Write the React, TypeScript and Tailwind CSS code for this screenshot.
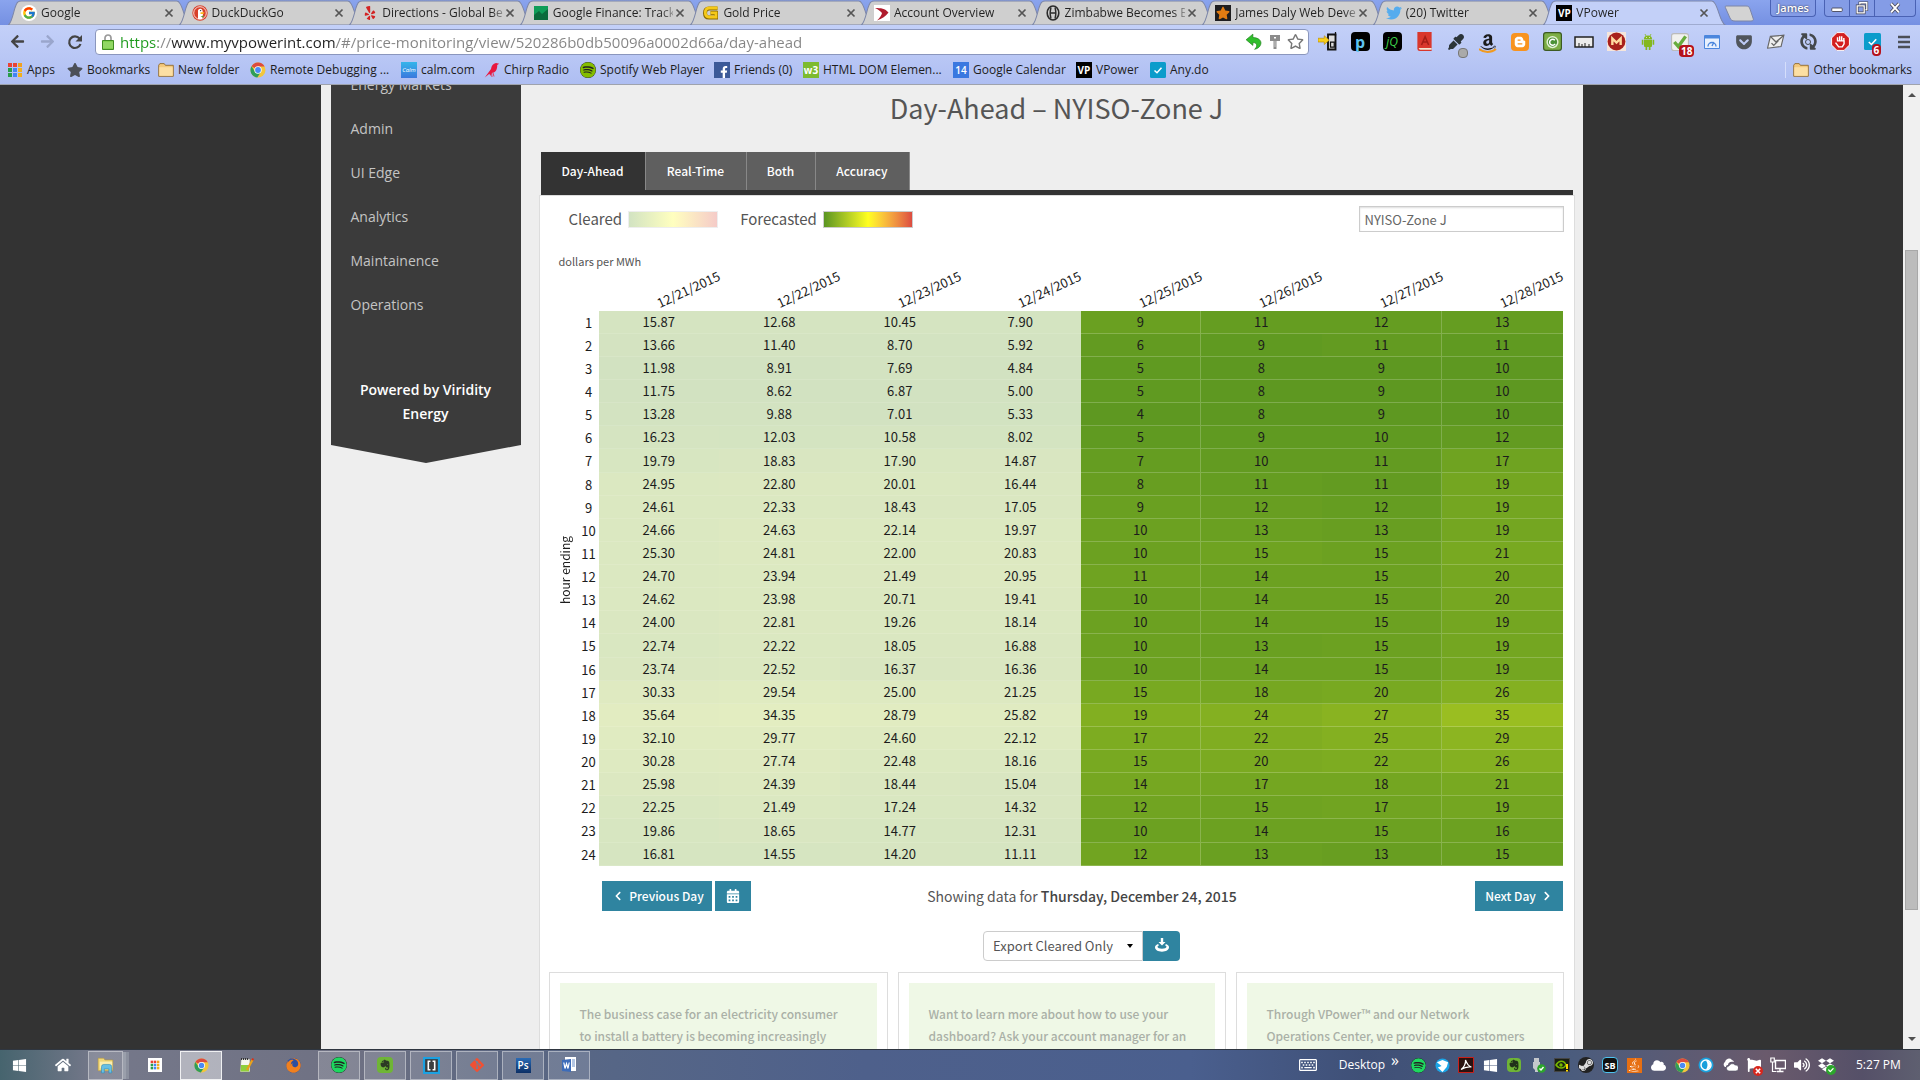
import React from "react";
import {
  FaAmazon, FaGetPocket, FaYelp, FaBloggerB, FaFacebookF, FaTwitter, FaEvernote, FaWindows, FaHome,
  FaDropbox, FaGitAlt, FaFirefox, FaJava, FaCloud, FaSteamSymbol, FaRegStar, FaStar, FaSpotify, FaCalendarAlt,
  FaChevronLeft, FaChevronRight, FaArrowLeft, FaArrowRight, FaEyeDropper, FaSyncAlt, FaRegKeyboard,
  FaVolumeUp, FaFlag, FaCheck,
} from "react-icons/fa";
import { FcGoogle } from "react-icons/fc";

const UI = "font-['Open_Sans','Noto_Sans',sans-serif]";
const BODY = "font-['Noto_Sans_CJK_SC','Noto_Sans',sans-serif]";

/* ---------- small drawings ---------- */

function Svg({ children, className = "size-4", box = "0 0 16 16" }: { children: React.ReactNode; className?: string; box?: string }) {
  return <svg viewBox={box} className={className + " shrink-0"} fill="none" aria-hidden="true">{children}</svg>;
}

function ChromeIcon({ className = "size-4" }: { className?: string }) {
  return (
    <Svg className={className}>
      <circle cx="8" cy="8" r="7.5" fill="#f2c63c" />
      <path d="M8 8 1.5 4.2A7.5 7.5 0 0 1 14.6 4.4H8z" fill="#dd4b3e" />
      <path d="M1.5 4.2A7.5 7.5 0 0 0 7.3 15.5L11 9.8 8 8 5 9.6z" fill="#2f9e58" />
      <circle cx="8" cy="8" r="3.7" fill="#fff" />
      <circle cx="8" cy="8" r="2.9" fill="#4a8af4" />
    </Svg>
  );
}

function FolderIcon() {
  return (
    <Svg>
      <path d="M.7 3.2 1.9 1.6h4.3l1.2 1.7h7.9v11H.7z" fill="#f4c97c" stroke="#8f6a31" strokeWidth=".9" />
      <path d="M1.3 5.2h13.4v8.6H1.3z" fill="#fcdfa3" />
    </Svg>
  );
}

function VPIcon() {
  return <span className="grid size-4 shrink-0 place-items-center bg-black text-[10px] font-bold leading-none text-white">VP</span>;
}

function SpotifyIcon({ dot, className }: { dot: string; className: string }) {
  return <FaSpotify className={"shrink-0 rounded-full bg-[#222] " + dot + " " + className} />;
}

function DuckIcon() {
  return (
    <Svg>
      <circle cx="8" cy="8" r="7.7" fill="#d8402a" />
      <circle cx="8" cy="8" r="6.3" stroke="#fff" strokeWidth=".8" />
      <path d="M6 14V6.500C5.500 3.500 9.800 2.800 10.600 5.800L11 9l-.8 5z" fill="#fff" />
      <path d="M8.500 7.300h4l-1 1.700H8.500z" fill="#fbb921" />
      <path d="m8.500 11.500 3 1v-2z" fill="#4aa83e" />
      <circle cx="8.600" cy="5.600" r=".7" fill="#234" />
    </Svg>
  );
}

function AppsIcon({ className = "size-4" }: { className?: string }) {
  const c = ["#e94335", "#e94335", "#f0a020", "#2a9d4b", "#4285f4", "#f0b020", "#2a9d4b", "#4285f4", "#f0b020"];
  return (
    <Svg className={className}>
      {c.map((f, i) => <rect key={i} x={1 + (i % 3) * 5} y={1 + Math.floor(i / 3) * 5} width="4" height="4" fill={f} />)}
    </Svg>
  );
}

function FinanceIcon() {
  return (
    <Svg>
      <path d="M1 1h14v14H1z" fill="#0f9d58" />
      <path d="m1 10 5-4 3 3 6-5v11H1z" fill="#0b6b3c" />
    </Svg>
  );
}

function GoldIcon() {
  return (
    <Svg>
      <path d="M14.500 3.500H6C3.500 3.500 2 5 2 8s1.500 4.600 4 4.600h7V8H7.500" stroke="#8a6a00" strokeWidth="4" />
      <path d="M14.500 3H6C3.500 3 2.300 5 2.300 7.600S3.500 12 6 12h7V7.800H7.500" stroke="#f5c918" strokeWidth="2.800" />
    </Svg>
  );
}

function AccountIcon() {
  return (
    <Svg>
      <path d="M0 0h16v16H0z" fill="#fff" />
      <path d="M1 3c6 0 10 .5 13.500 4.500C12 11 8 14 3 15.500c3-3 4.500-5 5-7.500C6 5.500 4 4.500 1 3z" fill="#b01c2e" />
    </Svg>
  );
}

function AtomIcon() {
  return (
    <Svg>
      <ellipse cx="8" cy="8" rx="5.800" ry="7" stroke="#2b2b2b" strokeWidth="1.600" />
      <path d="M6 2.500c-1 3-1 8 0 11M10 2.500c1 3 1 8 0 11M5.500 8h5" stroke="#2b2b2b" strokeWidth="1.300" />
    </Svg>
  );
}

function BlackStarIcon() {
  return <span className="grid size-4 shrink-0 place-items-center bg-[#1d1d1f]"><FaStar className="size-3.5 text-[#e07b12]" /></span>;
}

function BirdIcon() {
  return (
    <Svg>
      <path d="M.8 15.500 7 7c.5-3 2-5.500 5-6l3.200.8-2 1.200C13.500 8 11 11 7.500 11l-1.200 3-.9-2.200z" fill="#e8173f" />
      <path d="m7.500 11 .5 4M9 11l1 3.500" stroke="#e8173f" strokeWidth=".8" />
    </Svg>
  );
}

function AndroidIcon() {
  return (
    <Svg>
      <path d="M4 5.500h8V12a1 1 0 0 1-1 1H5a1 1 0 0 1-1-1zM4 5a4 3.500 0 0 1 8 0zM5.500 12.500h1.700V16H5.500zM8.800 12.500h1.700V16H8.800zM1.800 5.800h1.600v5H1.800zM12.600 5.800h1.600v5h-1.600z" fill="#84b81c" />
      <path d="m5 0 1 2m5-2-1 2" stroke="#84b81c" strokeWidth=".8" />
      <path d="M6 3.500h.8m2.400 0h.8" stroke="#fff" strokeWidth=".8" />
    </Svg>
  );
}

function KeyIcon() {
  return (
    <Svg className="h-4 w-3" box="0 0 12 16">
      <path d="M1 1h10v6H1z" fill="#8c8c8c" />
      <path d="M5 3h2v1.500H5z" fill="#fff" />
      <path d="M4.500 7h3v8h-3z" fill="#8c8c8c" />
      <path d="M6 7v6" stroke="#ddd" strokeWidth=".8" />
    </Svg>
  );
}

function AnyDoIcon({ className = "size-4" }: { className?: string }) {
  return (
    <Svg className={className}>
      <rect width="16" height="16" rx="1.500" fill="#0b9ccb" />
      <path d="m4.500 8.500 2.500 2.300 4.500-5" stroke="#fff" strokeWidth="1.500" />
    </Svg>
  );
}

function Badge({ children }: { children: React.ReactNode }) {
  return <span className="absolute -bottom-1.5 left-2 rounded-sm bg-[#b5121b] px-0.5 text-[10px] font-bold leading-3 text-white">{children}</span>;
}

/* ---------- browser chrome ---------- */

const TABS: { label: string; icon: React.ReactNode }[] = [
  { label: "Google", icon: <span className="grid size-4 shrink-0 place-items-center rounded-full bg-white"><FcGoogle className="size-3.5" /></span> },
  { label: "DuckDuckGo", icon: <DuckIcon /> },
  { label: "Directions - Global Be", icon: <FaYelp className="size-4 shrink-0 p-px text-[#d32323]" /> },
  { label: "Google Finance: Track", icon: <FinanceIcon /> },
  { label: "Gold Price", icon: <GoldIcon /> },
  { label: "Account Overview", icon: <AccountIcon /> },
  { label: "Zimbabwe Becomes B", icon: <AtomIcon /> },
  { label: "James Daly Web Deve", icon: <BlackStarIcon /> },
  { label: "(20) Twitter", icon: <FaTwitter className="size-4 shrink-0 text-[#55acee]" /> },
  { label: "VPower", icon: <VPIcon /> },
];

function TabStrip() {
  return (
    <div className="flex h-[25px] bg-linear-to-b from-[#8aa4ee] to-[#7590e2]">
      <div role="tablist" className="ml-2 flex max-w-[1706px] flex-1">
        {TABS.map((t, i) => {
          const active = i === TABS.length - 1;
          return (
            <div key={t.label} className="relative h-full min-w-0 flex-1">
              <svg viewBox="0 0 182 25" preserveAspectRatio="none" className="absolute inset-y-0 -right-3 left-0 h-full w-[calc(100%+12px)]" aria-hidden="true">
                <path d="M0 25C5 23 6 4 10 2Q11 1 13 1H168Q170 1 171 3C175 8 177 24 182 25Z" fill={active ? "#c3d0f8" : "#cfcfcf"} stroke="#7c86a8" strokeWidth="1" />
              </svg>
              <div className="relative flex h-full items-center gap-1 pl-[13px]">
                {t.icon}
                <button role="tab" aria-selected={active} className="min-w-0 flex-1 whitespace-nowrap bg-linear-to-r from-[#222] from-90% to-[#999] bg-clip-text text-left text-xs leading-5 text-transparent">{t.label}</button>
                <button aria-label={"Close " + t.label} className="-ml-1 mr-[3px] size-3.5 shrink-0">
                  <Svg className="size-3.5"><path d="m4 4 8 8m0-8-8 8" stroke="#555" strokeWidth="2" /></Svg>
                </button>
              </div>
            </div>
          );
        })}
      </div>
      <button aria-label="New tab" className="ml-2 h-[22px] w-[34px] self-center">
        <Svg box="0 0 34 20" className="h-[22px] w-[34px]"><path d="M4 3h20c3 0 3 1 4 3l3 9c1 2 0 3-2 3H13c-3 0-4-1-5-3L4 6C3 4 3 3 4 3z" fill="#d3d3d3" stroke="#7c86a8" /></Svg>
      </button>
      <div className="ml-auto flex items-start pr-1">
        <button className="mr-2 h-[17px] w-[46px] rounded-b border border-t-0 border-[#4a62b4] bg-[#849ce6] text-[11px] font-semibold leading-4 text-white [text-shadow:0_0_2px_#223]">James</button>
        <div className="flex rounded-b border border-t-0 border-[#4a62b4] bg-[#849ce6]">
          <button aria-label="Minimize" className="grid h-4 w-[25px] place-items-center border-r border-[#4a62b4]"><Svg className="size-3.5"><rect x="2" y="8" width="12" height="4" rx="1" fill="#fff" stroke="#445" /></Svg></button>
          <button aria-label="Restore" className="grid h-4 w-[25px] place-items-center border-r border-[#4a62b4]"><Svg className="size-3.5"><path d="M5.500 2h8v8h-8z" stroke="#445" strokeWidth="3" /><path d="M5.500 2h8v8h-8z" stroke="#fff" strokeWidth="1.500" /><path d="M2.500 5.500h8v8h-8z" fill="#849ce6" stroke="#445" strokeWidth="3" /><path d="M2.500 5.500h8v8h-8z" stroke="#fff" strokeWidth="1.500" /></Svg></button>
          <button aria-label="Close window" className="grid h-4 w-10 place-items-center"><Svg className="size-3.5"><path d="m3.500 3 9 10m0-10-9 10" stroke="#445" strokeWidth="4" /><path d="m3.500 3 9 10m0-10-9 10" stroke="#fff" strokeWidth="2.200" /></Svg></button>
        </div>
      </div>
    </div>
  );
}

const EXTENSIONS: { name: string; icon: React.ReactNode }[] = [
  { name: "Send to phone", icon: <Svg className="size-5"><path d="M8 2h6v12H8z" fill="#ddd" stroke="#111" strokeWidth="1.500" /><path d="M10 8h3v4h-3zM14 0v3" stroke="#111" /><path d="M0 5h5V3l4 3.500L5 10V8H0z" fill="#f8cf1b" stroke="#b58900" strokeWidth=".5" /></Svg> },
  { name: "Pandora", icon: <span className="grid size-[19px] place-items-center rounded-sm bg-black text-base font-bold leading-none text-[#5fc3f0]">p</span> },
  { name: "jQuery", icon: <span className="grid size-[19px] place-items-center rounded-sm bg-black text-xs italic leading-none text-[#3fd34a]">jQ</span> },
  { name: "Dictionary", icon: <Svg className="size-[19px]"><path d="M2 0h12v16H4a2 2 0 0 1-2-2z" fill="#d9372c" /><path d="M3 13.500h11v1.500H4z" fill="#f3e6d2" /><path d="m5.500 11 3-7 3 7M6.500 8.500h4" stroke="#a51e16" strokeWidth="1.300" /></Svg> },
  { name: "Color picker", icon: <span className="relative"><FaEyeDropper className="size-4 text-[#2b3438]" /><span className="absolute -bottom-2 left-2.5 size-2.5 rounded-sm border border-[#777] bg-[#aaa]" /></span> },
  { name: "Amazon", icon: <span className="relative"><FaAmazon className="size-[18px] text-[#1b1b1b]" /><Svg box="0 0 18 5" className="absolute -bottom-0.5 left-0 h-[5px] w-[18px]"><path d="M0 1c5 4 12 4 17 0" stroke="#f19a1f" strokeWidth="2" /></Svg></span> },
  { name: "Blogger", icon: <span className="grid size-[18px] place-items-center rounded-sm bg-[#f8931f]"><FaBloggerB className="size-3 text-white" /></span> },
  { name: "Clear cache", icon: <Svg className="size-[19px]"><rect x=".5" y=".5" width="15" height="15" rx="2" fill="#7cae46" stroke="#3c5a22" /><circle cx="8" cy="8.500" r="4.500" fill="#4b9136" stroke="#e3f2d4" strokeWidth="1.200" /><path d="M10 7a2.500 2.500 0 1 0 .2 3" stroke="#fff" strokeWidth="1.300" /></Svg> },
  { name: "Ruler", icon: <Svg box="0 0 20 12" className="h-3 w-5"><path d="M1 1h18v10H1z" fill="#ececec" stroke="#222" strokeWidth="1.500" /><path d="M5 11V7m3 4V8m3 3V7m4 4V8" stroke="#222" /></Svg> },
  { name: "Mega", icon: <Svg className="size-[19px]"><path d="M0 0h16v16H0z" fill="#f5e6dc" /><circle cx="8" cy="8" r="7.500" fill="#a8201c" /><path d="M4.500 11V5.500L8 9l3.500-3.500V11" stroke="#ffd9a0" strokeWidth="2" /></Svg> },
  { name: "Android", icon: <AndroidIcon /> },
  { name: "Checker", icon: <span className="relative"><Svg className="size-[18px]"><rect x=".5" y=".5" width="15" height="15" rx="2" fill="#f1f1ee" stroke="#bbb" /><path d="m3 8 3.500 4L13 3" stroke="#67ac3d" strokeWidth="3" /></Svg><Badge>18</Badge></span> },
  { name: "Page speed", icon: <Svg><path d="M.5 1.500h15v13H.5z" fill="#e8f0fd" stroke="#4b86dd" /><path d="M1 1h14v3.500H1z" fill="#4b86dd" /><path d="M4 12.500a4 4 0 0 1 8 0M8 12l2-4" stroke="#4b86dd" strokeWidth="1.400" /></Svg> },
  { name: "Pocket", icon: <FaGetPocket className="size-[18px] text-[#50555c]" /> },
  { name: "Mail", icon: <Svg className="size-[18px]"><path d="m3 3 12-1-2.500 10-12 1.500z" fill="#eee" stroke="#666" /><path d="m3 3 5 5 7-6M4 9l2 2 4-4" stroke="#666" strokeWidth="1.200" /></Svg> },
  { name: "Sync", icon: <span className="relative grid place-items-center"><FaSyncAlt className="size-[17px] rotate-90 text-[#44484c]" /><span className="absolute size-1.5 rounded-full border border-[#44484c]" /></span> },
  { name: "AdBlock", icon: <Svg className="size-[19px]"><path d="M5 .5h6L15.500 5v6L11 15.500H5L.5 11V5z" fill="#d31f1f" stroke="#fff" strokeWidth=".8" /><path d="M5.500 8V4.500M7.300 8V3.500M9 8V3.500M10.800 8V5M5.200 7.500h5.800v2.500L9.500 12.500h-3L3.800 9" stroke="#fff" strokeWidth="1.200" /></Svg> },
  { name: "Any.do", icon: <span className="relative"><AnyDoIcon className="size-[17px]" /><Badge>6</Badge></span> },
  { name: "Menu", icon: <Svg><path d="M2 3h12M2 8h12M2 13h12" stroke="#4b4f57" strokeWidth="2.600" /></Svg> },
];

function Toolbar() {
  return (
    <div className="flex h-8 items-center bg-linear-to-b from-[#c3d0f8] to-[#b9c7f5] pt-px">
      <div className="flex w-[95px] shrink-0 items-center pl-[5px]">
        <button aria-label="Back" className="grid h-6 w-6 place-items-center"><FaArrowLeft className="size-[15px] text-[#444]" /></button>
        <button aria-label="Forward" className="ml-1.5 grid h-6 w-6 place-items-center"><FaArrowRight className="size-[15px] text-[#9aa6cc]" /></button>
        <button aria-label="Reload" className="ml-1 grid h-6 w-6 place-items-center">
          <Svg><path d="M12.500 4.500A5.800 5.800 0 1 0 13.500 10" stroke="#444" strokeWidth="2.200" /><path d="M15 1v6.500H8.500z" fill="#444" /></Svg>
        </button>
      </div>
      <div className="flex h-[26px] min-w-0 flex-1 items-center rounded-sm border border-[#8a96bd] bg-white pl-1.5 pr-1">
        <Svg className="h-4 w-3" box="0 0 12 16">
          <path d="M3 7V4a3 3 0 0 1 6 0v3" stroke="#9a9a9a" strokeWidth="1.700" />
          <path d="M.5 6.500h11v9H.5z" fill="#7fd04c" stroke="#3f8c22" />
          <path d="M1 9h10M1 11h10M1 13h10" stroke="#b5e694" strokeWidth=".7" />
        </Svg>
        <input
          aria-label="Address"
          defaultValue="https://www.myvpowerint.com/#/price-monitoring/view/520286b0db50096a0002d66a/day-ahead"
          className="ml-1.5 h-[22px] min-w-0 flex-1 bg-[linear-gradient(to_right,#1c9a1c_38px,#888_38px,#888_52px,#222_52px,#222_216px,#848484_216px)] bg-clip-text text-[15px] leading-[22px] text-transparent outline-none"
        />
        <div className="flex items-center gap-1.5">
          <Svg className="size-[18px]"><path d="M1 6 7 1v3c5 0 8 3 7 6-.6 2.500-3 4-5.500 4.500C11 12.500 11.500 8.500 7 8.500V11z" fill="#2fbf2b" stroke="#1c7f1a" strokeWidth=".6" /></Svg>
          <KeyIcon />
          <button aria-label="Bookmark this page"><FaRegStar className="size-[17px] text-[#777]" /></button>
        </div>
      </div>
      <div className="ml-[3px] flex shrink-0">
        {EXTENSIONS.map((e) => <button key={e.name} aria-label={e.name} className="grid h-6 w-8 place-items-center">{e.icon}</button>)}
      </div>
    </div>
  );
}

const BOOKMARKS: { label: string; w: string; icon: React.ReactNode }[] = [
  { label: "Apps", w: "w-[60px]", icon: <AppsIcon /> },
  { label: "Bookmarks", w: "w-[91px]", icon: <FaStar className="size-4 shrink-0 text-[#4b4f57]" /> },
  { label: "New folder", w: "w-[92px]", icon: <FolderIcon /> },
  { label: "Remote Debugging ...", w: "w-[151px]", icon: <ChromeIcon /> },
  { label: "calm.com", w: "w-[83px]", icon: <span className="grid size-4 shrink-0 place-items-center bg-linear-to-b from-[#35b5ea] to-[#3a78dd] text-[6px] italic leading-none text-white">Calm</span> },
  { label: "Chirp Radio", w: "w-24", icon: <BirdIcon /> },
  { label: "Spotify Web Player", w: "w-[134px]", icon: <SpotifyIcon dot="text-[#84bd00]" className="size-4" /> },
  { label: "Friends (0)", w: "w-[89px]", icon: <span className="flex size-4 shrink-0 items-end justify-end bg-[#3b5998]"><FaFacebookF className="size-3 text-white" /></span> },
  { label: "HTML DOM Elemen...", w: "w-[150px]", icon: <span className="grid h-4 w-4 shrink-0 place-items-center bg-[#7dbb2f] text-[10px] font-bold leading-none text-white">w3</span> },
  { label: "Google Calendar", w: "w-[123px]", icon: <span className="grid size-4 shrink-0 place-items-center bg-[#3a78e0] text-[10px] font-semibold leading-none text-white">14</span> },
  { label: "VPower", w: "w-[74px]", icon: <VPIcon /> },
  { label: "Any.do", w: "w-16", icon: <AnyDoIcon /> },
];

function BookmarksBar() {
  return (
    <nav aria-label="Bookmarks" className="flex h-7 items-center border-b border-[#9fa3ad] bg-linear-to-b from-[#b9c7f5] to-[#aebef2] pb-px pl-[7px] pr-2 text-xs text-[#1d1d1d]">
      {BOOKMARKS.map((b) => (
        <a key={b.label} href="#" className={"flex shrink-0 items-center gap-1 whitespace-nowrap " + b.w}>{b.icon}{b.label}</a>
      ))}
      <a href="#" className="ml-auto flex items-center gap-1 whitespace-nowrap border-l border-[#d5defb] pl-[7px]"><FolderIcon />Other bookmarks</a>
    </nav>
  );
}

/* ---------- price page ---------- */

const DATES = ["12/21/2015", "12/22/2015", "12/23/2015", "12/24/2015", "12/25/2015", "12/26/2015", "12/27/2015", "12/28/2015"];
const ROWS = `15.87 12.68 10.45 7.90 9 11 12 13
13.66 11.40 8.70 5.92 6 9 11 11
11.98 8.91 7.69 4.84 5 8 9 10
11.75 8.62 6.87 5.00 5 8 9 10
13.28 9.88 7.01 5.33 4 8 9 10
16.23 12.03 10.58 8.02 5 9 10 12
19.79 18.83 17.90 14.87 7 10 11 17
24.95 22.80 20.01 16.44 8 11 11 19
24.61 22.33 18.43 17.05 9 12 12 19
24.66 24.63 22.14 19.97 10 13 13 19
25.30 24.81 22.00 20.83 10 15 15 21
24.70 23.94 21.49 20.95 11 14 15 20
24.62 23.98 20.71 19.41 10 14 15 20
24.00 22.81 19.26 18.14 10 14 15 19
22.74 22.22 18.05 16.88 10 13 15 19
23.74 22.52 16.37 16.36 10 14 15 19
30.33 29.54 25.00 21.25 15 18 20 26
35.64 34.35 28.79 25.82 19 24 27 35
32.10 29.77 24.60 22.12 17 22 25 29
30.28 27.74 22.48 18.16 15 20 22 26
25.98 24.39 18.44 15.04 14 17 18 21
22.25 21.49 17.24 14.32 12 15 17 19
19.86 18.65 14.77 12.31 10 14 15 16
16.81 14.55 14.20 11.11 12 13 13 15`.split("\n").map((r) => r.split(" "));

const COLUMN_MIN = DATES.map((_, c) => Math.min(...ROWS.map((r) => Number(r[c]))));

function heat(value: string, col: number) {
  const d = Number(value) - COLUMN_MIN[col];
  const r = Math.round(94 + d * 2.4);
  const g = Math.round(152 + d * 1.5);
  return `rgba(${r}, ${g}, 33, ${col < 4 ? 0.28 : 1})`;
}

function PriceTable() {
  return (
    <table className="w-full table-fixed border-separate border-spacing-0 text-center text-[13px] leading-4 text-[#1c1c1c]">
      <colgroup>
        <col className="w-[22px]" />
        <col className="w-5" />
        {DATES.map((d) => <col key={d} />)}
      </colgroup>
      <thead>
        <tr className="h-[41px]">
          <td colSpan={2} />
          {DATES.map((d) => (
            <th key={d} scope="col" className="p-0 align-bottom font-normal">
              <span className="ml-[62px] block w-16 origin-bottom-left -rotate-[25deg] whitespace-nowrap text-left text-[13px]">{d}</span>
            </th>
          ))}
        </tr>
      </thead>
      <tbody>
        {ROWS.map((row, i) => (
          <tr key={i} className="h-[23px] nth-[8n-1]:h-6">
            {i === 0 && (
              <th rowSpan={24} scope="rowgroup" className="p-0 text-left align-middle text-xs font-normal">
                <span className="inline-block rotate-180 pt-[34px] leading-4 [writing-mode:vertical-rl]">hour ending</span>
              </th>
            )}
            <th scope="row" className="p-0 font-normal">{i + 1}</th>
            {row.map((v, c) => (
              <td key={c} style={{ backgroundColor: heat(v, c) }}
                className={c < 4 ? "border-b border-white/10 p-0" : c % 2 === 0 ? "border-b border-r border-white/20 p-0" : "border-b border-white/20 p-0"}>
                {v}
              </td>
            ))}
          </tr>
        ))}
      </tbody>
    </table>
  );
}

function Sidebar() {
  const items = ["Energy Markets", "Admin", "UI Edge", "Analytics", "Maintainence", "Operations"];
  return (
    <aside className={"ml-2.5 w-[190px] shrink-0 " + UI}>
      <div className="bg-[#3b3b3b] pb-[19px]">
        <nav aria-label="Main" className="-mt-[22px] flex flex-col">
          {items.map((t) => <a key={t} href="#" className="pl-5 text-sm leading-[44px] text-[#c4c4c4]">{t}</a>)}
        </nav>
        <p className="mt-[51px] px-6 text-center text-sm font-semibold leading-6 text-white">Powered by Viridity Energy</p>
      </div>
      <svg viewBox="0 0 190 18" preserveAspectRatio="none" className="block h-[18px] w-full" aria-hidden="true"><path d="M0 0h190L95 18z" fill="#3b3b3b" /></svg>
    </aside>
  );
}

const CARDS = [
  ["The business case for an electricity consumer", "to install a battery is becoming increasingly"],
  ["Want to learn more about how to use your", "dashboard? Ask your account manager for an"],
  ["Through VPower™ and our Network", "Operations Center, we provide our customers"],
];

function PricePage() {
  const tabs = [
    { t: "Day-Ahead", w: "w-[105px] bg-[#333]" },
    { t: "Real-Time", w: "w-[101px] bg-[#5f5f5f]" },
    { t: "Both", w: "w-[69px] bg-[#5f5f5f]" },
    { t: "Accuracy", w: "w-[94px] bg-[#5f5f5f]" },
  ];
  return (
    <section className={"ml-[18px] mr-2 min-w-0 flex-1 text-[#555] " + BODY}>
      <h1 className="pb-[26px] pt-[5px] text-center text-[27px] leading-9">Day-Ahead – NYISO-Zone J</h1>
      <div role="tablist" className="mx-0.5 flex border-b-[5px] border-[#333]">
        {tabs.map((x) => (
          <button key={x.t} role="tab" aria-selected={x.t === "Day-Ahead"} className={"h-[38px] border-r border-[#888] text-xs font-medium text-white " + x.w}>{x.t}</button>
        ))}
      </div>
      <div className="border border-[#ddd] bg-white pb-10">
        <div className="mt-2.5 flex h-[26px] items-center pl-[29px] pr-2.5 text-[15px]">
          <span>Cleared</span>
          <span className="ml-1.5 h-[17px] w-[90px] border border-[#eee] bg-linear-to-r from-[#d2e3c2] via-[#ffffbf] to-[#f5cbc8]" />
          <span className="ml-[22px]">Forecasted</span>
          <span className="ml-1.5 h-[17px] w-[90px] border border-[#ccc] bg-linear-to-r from-[#5a9522] via-[#ffff20] to-[#dc4b41]" />
          <input aria-label="Zone" defaultValue="NYISO-Zone J" className="ml-auto h-[26px] w-[205px] border border-[#ccc] px-[5px] text-[13px] text-[#666] shadow-[inset_0_1px_2px_#ddd] outline-none" />
        </div>
        <div className="pl-[17px] pr-[11px]">
          <p className="ml-0.5 mt-5 text-[11px] leading-[18px]">dollars per MWh</p>
          <PriceTable />
          <div className="ml-[45px] mt-[15px] grid grid-cols-[1fr_auto_1fr] items-center">
            <div className="flex gap-[3px]">
              <button className="flex h-[30px] w-[110px] items-center justify-center gap-1.5 bg-[#2f84a0] pl-1 text-xs font-medium text-white"><FaChevronLeft className="size-2.5" />Previous Day</button>
              <button aria-label="Pick a date" className="grid h-[30px] w-9 place-items-center bg-[#2f84a0] text-white"><FaCalendarAlt className="size-3.5" /></button>
            </div>
            <p className="text-sm leading-6">Showing data for <span className="font-medium text-[#444]">Thursday, December 24, 2015</span></p>
            <button className="flex h-[30px] w-[88px] items-center justify-center gap-1.5 justify-self-end bg-[#2f84a0] text-xs font-medium text-white">Next Day<FaChevronRight className="size-2.5" /></button>
          </div>
          <div className="ml-11 mt-5 flex justify-center">
            <div className="relative">
              <select aria-label="Export" className="h-[30px] w-40 appearance-none rounded-l border border-[#ccc] bg-white pl-[9px] text-[13px] text-[#555] outline-none"><option>Export Cleared Only</option></select>
              <span className="pointer-events-none absolute right-2.5 top-[13px] border-x-[3px] border-t-4 border-x-transparent border-t-black" />
            </div>
            <button aria-label="Download" className="grid h-[30px] w-[37px] place-items-center rounded-r bg-[#2f84a0] text-white">
              <Svg className="size-4"><path d="M6.800 0h2.400v4h2.300L8 7.500 4.500 4h2.300z" fill="#fff" /><path d="M4 6C2 6.800 1 8 1 9.300 1 12 4 13.700 8 13.700s7-1.700 7-4.400C15 8 14 6.800 12 6l-1 1.300c1 .4 1.500.9 1.500 1.400 0 1.300-2 2-4.500 2s-4.500-.7-4.500-2c0-.5.5-1 1.500-1.400z" fill="#fff" /></Svg>
            </button>
          </div>
        </div>
        <div className="ml-[9px] mr-2.5 mt-[11px] grid grid-cols-[339fr_328fr_328fr] gap-2.5">
          {CARDS.map((c) => (
            <article key={c[0]} className="min-w-0 border border-[#ddd] p-2.5">
              <p className="h-[100px] whitespace-nowrap bg-[#eff8e6] px-5 pt-5 text-xs font-medium leading-[22px] text-[#aab0a6]">{c[0]}<br />{c[1]}</p>
            </article>
          ))}
        </div>
      </div>
    </section>
  );
}

/* ---------- taskbar ---------- */

const BOXED = "bg-white/15 border-white/40";
const PLAIN = "border-transparent";
const TASKS: { name: string; box: string; icon: React.ReactNode }[] = [
  { name: "Start", box: PLAIN, icon: <FaWindows className="size-[15px] text-white" /> },
  { name: "Home", box: PLAIN, icon: <FaHome className="size-4 text-white" /> },
  { name: "File Explorer", box: BOXED + " shadow-[4px_0_0_-1px_#9a9fab,7px_0_0_-1px_#8b909e]", icon: <Svg className="size-[18px]"><path d="M1 2h5l1 1.500h7V13H1z" fill="#f0d778" stroke="#b8973a" strokeWidth=".5" /><path d="M2.500 5h11v6h-11z" fill="#fbeeb0" /><path d="M4 15V9.500a2 2 0 0 1 2-2h5a2 2 0 0 1 2 2V15h-2.500v-3.500h-4V15z" fill="#67bfe4" stroke="#2d87b3" strokeWidth=".5" /></Svg> },
  { name: "Apps", box: PLAIN, icon: <span className="grid size-3.5 place-items-center bg-white"><AppsIcon className="size-2.5" /></span> },
  { name: "Chrome", box: "bg-white/45 border-white/80", icon: <ChromeIcon className="size-[15px]" /> },
  { name: "Notepad++", box: PLAIN, icon: <Svg><path d="M2 2h9v13H1z" fill="#f5f7ee" stroke="#777" strokeWidth=".6" /><path d="M2 8h8v6.500H1.500z" fill="#8fcf3c" /><path d="M2.500 1v2m2-2v2m2-2v2m2-2v2" stroke="#333" /><path d="m8 13 6-11" stroke="#e8a21c" strokeWidth="2.200" /><path d="m13.300 3.200.9-1.700" stroke="#d03020" strokeWidth="2.200" /></Svg> },
  { name: "Firefox", box: PLAIN, icon: <span className="grid size-[15px] place-items-center rounded-full bg-[#2c4fa0]"><FaFirefox className="size-[15px] text-[#f0801e]" /></span> },
  { name: "Spotify", box: BOXED, icon: <SpotifyIcon dot="text-[#1ed760]" className="size-4" /> },
  { name: "Evernote", box: BOXED, icon: <span className="grid size-4 place-items-center rounded-sm bg-[#6fb536]"><FaEvernote className="size-3 text-[#2c3a24]" /></span> },
  { name: "Brackets", box: BOXED, icon: <Svg className="size-[17px]"><path d="M0 0h16v16H0z" fill="#1ba1e2" /><path d="M2 2h12v12H2z" fill="#3c3f41" /><path d="M7 4H5v8h2m2-8h2v8H9" stroke="#fff" strokeWidth="1.500" /></Svg> },
  { name: "Git", box: BOXED, icon: <FaGitAlt className="size-4 text-[#f05033]" /> },
  { name: "Photoshop", box: BOXED, icon: <span className="grid size-[15px] place-items-center bg-linear-to-b from-[#2a6bb5] to-[#0c2f66] text-[10px] font-semibold leading-none text-white">Ps</span> },
  { name: "Word", box: BOXED, icon: <Svg><path d="M4 0h11v14H4z" fill="#fff" /><path d="M11 3h3m-3 2h3m-3 2h3m-3 2h3" stroke="#6a8fc8" /><path d="m1 3 9-1v13l-9-1z" fill="#3d6cb9" /><path d="m2.800 5.500 1.200 6 1.500-5 1.500 5 1.200-6" stroke="#fff" strokeWidth="1.200" /></Svg> },
];

const TRAY: React.ReactNode[] = [
  <SpotifyIcon dot="text-[#1ed760]" className="size-[15px]" />,
  <Svg className="size-[15px]"><circle cx="8" cy="8" r="7.500" fill="#1ba5e8" /><path d="M2 4.500 8 2l6 2.500-1.500 5L8 15l-5-5 4-1.500z" fill="#fff" /></Svg>,
  <Svg><path d="M.5.5h15v15H.5z" fill="#2a1210" stroke="#c8201a" /><path d="M3 12.500C6 11 8 6 7.500 3 9 7 11 9.500 13.500 10 9.500 9.500 6 10.500 3 12.500z" stroke="#fff" strokeWidth="1.200" /></Svg>,
  <FaWindows className="size-[15px] text-white" />,
  <span className="grid size-3.5 place-items-center rounded-sm bg-[#6fb536]"><FaEvernote className="size-3 text-[#20301a]" /></span>,
  <Svg><path d="M4 1h5v4H4zM3 5h7v6l-2 2v2H5v-2l-2-2z" fill="#c4c8cc" /><circle cx="11.500" cy="11.500" r="4.300" fill="#2ca62c" /><path d="m9.500 11.500 1.500 1.500 2.500-3" stroke="#fff" strokeWidth="1.400" /></Svg>,
  <Svg><path d="M.5 1.500h15v13H.5z" fill="#1a1f14" stroke="#444" /><path d="M2 8c3-5 8-5 10 0-2 4-7 4-10 0z" stroke="#76b900" strokeWidth="1.500" /><circle cx="7" cy="8" r="1.700" fill="#76b900" /><path d="M13 7v5m0 1v1.500" stroke="#ffd800" strokeWidth="2" /></Svg>,
  <FaSteamSymbol className="size-4 rounded-full bg-[#222] text-[#ddd]" />,
  <span className="grid size-4 place-items-center rounded-sm border border-[#4fc3f0] bg-[#111] text-[9px] font-bold leading-none text-white">SB</span>,
  <span className="grid size-[15px] place-items-center bg-[#e76f12]"><FaJava className="size-3.5 text-white" /></span>,
  <FaCloud className="size-[15px] text-white" />,
  <ChromeIcon className="size-[15px]" />,
  <Svg><circle cx="8" cy="8" r="7.500" fill="#1aa0dc" /><path d="M8 3.500a4.500 4.500 0 0 1 0 9c2-3 2-6 0-9z" fill="#fff" /><circle cx="8" cy="8" r="5" stroke="#fff" strokeWidth="1.500" /></Svg>,
  <Svg><path d="M3 10a3 3 0 0 1 0-5 4 4 0 0 1 7-2 3 3 0 0 1 2 2C8 4 6 6 6 8c-2 0-2 1-2 2z" fill="#fff" /><path d="M7 14a2.500 2.500 0 0 1 0-5 3.500 3.500 0 0 1 6-1 3 3 0 0 1 1 6z" fill="#fff" stroke="#556" strokeWidth=".6" /></Svg>,
  <span className="relative"><FaFlag className="size-3.5 text-white" /><Svg className="absolute -bottom-1 left-1.5 size-2.5"><circle cx="8" cy="8" r="8" fill="#d8261c" /><path d="m4.500 4.500 7 7m0-7-7 7" stroke="#fff" strokeWidth="2.500" /></Svg></span>,
  <Svg><path d="M5.500 3.500h10v8h-10zM10 12v2.500M7 14.500h6.500" stroke="#fff" strokeWidth="1.400" /><path d="M.8 1h3.500v4H.8zM2.500 5v9.500h4" stroke="#fff" strokeWidth="1.200" /></Svg>,
  <FaVolumeUp className="size-4 text-white" />,
  <span className="relative"><FaDropbox className="size-4 text-white" /><FaCheck className="absolute -bottom-0.5 left-2 size-2.5 rounded-full bg-[#2ca62c] p-0.5 text-white" /></span>,
];

function Taskbar() {
  return (
    <footer className="flex h-[31px] shrink-0 items-center border-t border-[#2f3640] bg-[linear-gradient(to_right,#46646e_0,#75788a_5%,#6f7183_18%,#5c6781_26%,#566686_32%,#4e608b_45%,#4a5f8e_62%,#3f5077_71%,#4b5c7d_82%,#6a5a6c_92%,#555068_97%,#5e5f70_100%)]">
      <div className="flex gap-1">
        {TASKS.map((t) => (
          <button key={t.name} aria-label={t.name} className={"grid h-[29px] w-[42px] place-items-center border first:w-[38px] nth-[3]:w-[35px] nth-[3]:mr-[7px] " + t.box}>{t.icon}</button>
        ))}
      </div>
      <div className="ml-auto flex items-center text-xs text-white">
        <FaRegKeyboard className="size-[18px]" />
        <button className="ml-[22px]">Desktop</button>
        <button aria-label="More" className="-mt-2.5 ml-1.5 mr-[7px] text-base leading-4">»</button>
        {TRAY.map((n, i) => <span key={i} className="grid h-6 w-6 place-items-center">{n}</span>)}
        <time className="ml-[18px] w-[64px] whitespace-nowrap">5:27 PM</time>
      </div>
    </footer>
  );
}

export default function App() {
  return (
    <div className={"flex h-screen flex-col overflow-hidden " + UI}>
      <header className="shrink-0">
        <TabStrip />
        <Toolbar />
        <BookmarksBar />
      </header>
      <div className="flex min-h-0 flex-1">
        <main className="min-w-0 flex-1 overflow-hidden bg-[#333]">
          <div className="mx-auto flex min-h-full w-full max-w-[1262px] items-start bg-[#eee]">
            <Sidebar />
            <PricePage />
          </div>
        </main>
        <div aria-hidden="true" className="flex w-[17px] shrink-0 flex-col items-center bg-[#f0f0f0] py-2">
          <span className="border-x-4 border-b-4 border-x-transparent border-b-[#505050]" />
          <span className="mt-[153px] h-[660px] w-[13px] border border-[#a8a8a8] bg-[#bcbcbc]" />
          <span className="mt-auto border-x-4 border-t-4 border-x-transparent border-t-[#505050]" />
        </div>
      </div>
      <Taskbar />
    </div>
  );
}
